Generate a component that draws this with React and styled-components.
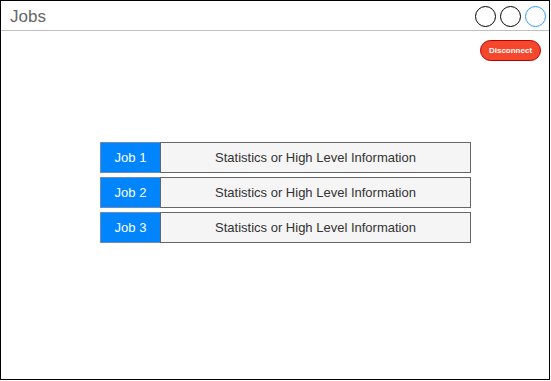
import React from "react";
import styled, { createGlobalStyle } from "styled-components";

const Global = createGlobalStyle`
  html, body { margin: 0; padding: 0; background: #ffffff; }
  * { box-sizing: border-box; }
`;

const Frame = styled.div`
  width: 550px;
  height: 380px;
  border: 1px solid #000000;
  background: #ffffff;
  font-family: "Liberation Sans", Arial, Helvetica, sans-serif;
  display: flex;
  flex-direction: column;
`;

const Header = styled.div`
  height: 30px;
  border-bottom: 1px solid #c0c0c0;
  display: flex;
  align-items: center;
  justify-content: space-between;
  padding: 0 3px 0 9px;
`;

const Title = styled.div`
  font-size: 17px;
  color: #666666;
  line-height: 1;
  padding-top: 1px;
`;

const Controls = styled.div`
  display: flex;
  gap: 4px;
  padding-top: 1px;
`;

const Dot = styled.div`
  width: 21px;
  height: 21px;
  border-radius: 50%;
  border: 1px solid ${(p) => (p.$active ? "#3399ff" : "#000000")};
  background: #ffffff;
`;

const Body = styled.div`
  flex: 1;
  display: flex;
  flex-direction: column;
  padding: 9px 8px 0 99px;
`;

const Actions = styled.div`
  display: flex;
  justify-content: flex-end;
`;

const DisconnectButton = styled.button`
  width: 61px;
  height: 21px;
  border-radius: 10.5px;
  border: 1px solid #b20000;
  background: #f5472c;
  color: #ffffff;
  font-family: "Liberation Sans", Arial, sans-serif;
  font-weight: bold;
  font-size: 8px;
  padding: 0;
  display: flex;
  align-items: center;
  justify-content: center;
`;

const JobList = styled.div`
  margin-top: 81px;
  display: flex;
  flex-direction: column;
  gap: 4px;
`;

const Row = styled.div`
  display: flex;
  height: 31px;
`;

const JobCell = styled.div`
  width: 61px;
  height: 100%;
  background: #0085ff;
  border: 1px solid #6c8ebf;
  color: #ffffff;
  font-size: 13px;
  display: flex;
  align-items: center;
  justify-content: center;
`;

const InfoCell = styled.div`
  width: 311px;
  height: 100%;
  margin-left: -1px;
  background: #f5f5f5;
  border: 1px solid #666666;
  color: #333333;
  font-size: 13px;
  display: flex;
  align-items: center;
  justify-content: center;
`;

const jobs = ["Job 1", "Job 2", "Job 3"];

export default function App() {
  return (
    <>
      <Global />
      <Frame>
        <Header>
          <Title>Jobs</Title>
          <Controls>
            <Dot />
            <Dot />
            <Dot $active />
          </Controls>
        </Header>
        <Body>
          <Actions>
            <DisconnectButton>Disconnect</DisconnectButton>
          </Actions>
          <JobList>
            {jobs.map((j) => (
              <Row key={j}>
                <JobCell>{j}</JobCell>
                <InfoCell>Statistics or High Level Information</InfoCell>
              </Row>
            ))}
          </JobList>
        </Body>
      </Frame>
    </>
  );
}
